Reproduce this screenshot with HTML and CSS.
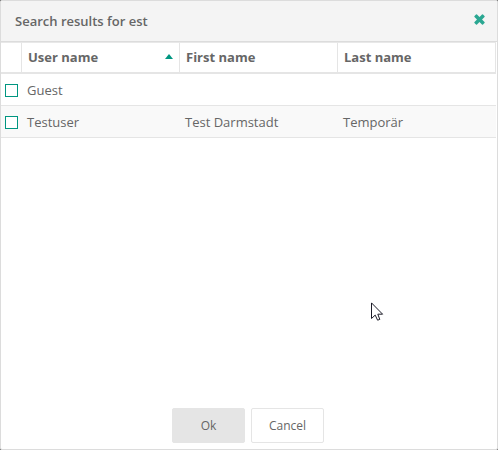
FILE: index.html
```html
<!DOCTYPE html>
<html lang="en">
<head>
    <meta charset="UTF-8">
    <meta name="viewport" content="width=device-width, initial-scale=1.0">
    <title>Search results</title>
    <link rel="stylesheet" href="styles.css">
</head>
<body>
    <div class="dialog" role="dialog" aria-labelledby="dialogTitle">
        <div class="dialog-header">
            <h1 id="dialogTitle">Search results for est</h1>
            <button type="button" class="close" aria-label="Close">
                <svg width="11" height="11" viewBox="0 0 11 11">
                    <path d="M3 .5 5.5 3 8 .5Q8.5 0 9 .5L10.5 2Q11 2.5 10.5 3L8 5.5 10.5 8Q11 8.500 10.500 9L9 10.500Q8.500 11 8 10.500L5.500 8 3 10.500Q2.500 11 2 10.500L.5 9Q0 8.500 .5 8L3 5.500 .5 3Q0 2.500 .5 2L2 .5Q2.500 0 3 .5z" fill="#2aa792"/>
                </svg>
            </button>
        </div>
        <div class="dialog-body">
            <table class="results">
                <thead>
                    <tr>
                        <th class="check"></th>
                        <th>
                            <div class="sorted">
                                User name
                                <svg width="8" height="5" viewBox="0 0 8 5"><path d="M4 0 8 5H0z" fill="#009681"/></svg>
                            </div>
                        </th>
                        <th>First name</th>
                        <th>Last name</th>
                    </tr>
                </thead>
                <tbody>
                    <tr>
                        <td class="check"><input type="checkbox" class="checkbox" id="user1"></td>
                        <td><label for="user1">Guest</label></td>
                        <td></td>
                        <td></td>
                    </tr>
                    <tr>
                        <td class="check"><input type="checkbox" class="checkbox" id="user2"></td>
                        <td><label for="user2">Testuser</label></td>
                        <td>Test Darmstadt</td>
                        <td>Temporär</td>
                    </tr>
                </tbody>
            </table>
        </div>
        <div class="dialog-footer">
            <button type="button" class="btn btn-primary">Ok</button>
            <button type="button" class="btn">Cancel</button>
        </div>
    </div>
    <svg class="cursor" width="13" height="20" viewBox="0 0 13 20">
        <path d="M.5.9V16.500L4.200 13.100 6.600 18.200 8.800 17.400 6.800 12.200H11.600z" fill="#fff" stroke="#1c1c28" stroke-width="1"/>
    </svg>
</body>
</html>
```

FILE: styles.css
```css
body {
    margin: 0;
    background-color: #777;
    font-family: "Open Sans", sans-serif;
    font-size: 13px;
    line-height: 18px;
    color: #666;
}
.dialog {
    display: flex;
    flex-direction: column;
    min-height: 100vh;
    box-sizing: border-box;
    border: 1px solid #dcdcdc;
    border-radius: 2px;
    background-color: #fff;
}
.dialog-header {
    display: flex;
    justify-content: space-between;
    align-items: flex-start;
    padding: 11px 12px 11px 14px;
    border-bottom: 1px solid #dcdcdc;
    background-color: #f4f4f4;
}
h1 {
    margin: 0;
    font-size: 13px;
    font-weight: 600;
}
.close {
    display: flex;
    margin: 2px 0 0;
    padding: 0;
    border: none;
    background: none;
    cursor: pointer;
}
.dialog-body {
    flex: 1;
    padding-right: 1px;
}
.results {
    width: 100%;
    table-layout: fixed;
    border-collapse: separate;
    border-spacing: 0;
    text-align: left;
}
th {
    height: 27px;
    padding: 0 6px 2px;
    border-top: 1px solid #e8e8e8;
    border-right: 1px solid #e5e5e5;
    border-bottom: 2px solid #e5e5e5;
    font-weight: 700;
}
.sorted {
    display: flex;
    justify-content: space-between;
    align-items: center;
}
td {
    height: 31px;
    padding: 0 5px;
    border-bottom: 1px solid #e5e5e5;
}
tbody tr:nth-child(even) {
    background-color: #f9f9f9;
}
th.check {
    width: 20px;
    padding: 0;
}
td.check {
    padding: 0 0 0 4px;
}
.checkbox {
    -webkit-appearance: none;
    appearance: none;
    display: block;
    box-sizing: border-box;
    width: 13px;
    height: 13px;
    margin: 2px 0 0;
    border: 1px solid #009681;
    border-radius: 0;
    background-color: #fff;
}
.checkbox:checked {
    background-color: #009681;
}
.dialog-footer {
    display: flex;
    justify-content: center;
    gap: 6px;
    padding: 6px 8px 6px 6px;
}
.btn {
    width: 73px;
    height: 35px;
    padding: 0;
    border: 1px solid #e5e5e5;
    border-radius: 2px;
    background-color: #fff;
    font-family: inherit;
    font-size: 12px;
    color: #666;
    cursor: pointer;
}
.btn-primary {
    background-color: #e5e5e5;
}
/* mouse pointer over the dialog */
.cursor {
    position: absolute;
    left: 371px;
    top: 302px;
    pointer-events: none;
}
```
